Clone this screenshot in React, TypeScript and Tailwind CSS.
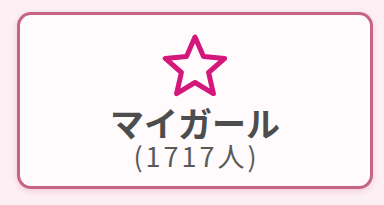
export default function App() {
  return (
    <div className="h-[205px] w-[384px] bg-[#fdf0f4] pl-[17px] pt-[12px]">
      <div className="flex h-[177px] w-[356px] flex-col items-center rounded-[14px] border-[3px] border-[#c66484] bg-[#fffbfd] pt-[18px] shadow-[0_2px_6px_rgba(200,100,130,0.25)]">
        <svg width="68" height="64" viewBox="0 0 68 64">
          <polygon
            points="34,4 42.5,23.5 63.7,25.4 47.6,39.5 52.4,60.6 34,49.5 15.6,60.6 20.4,39.5 4.3,25.4 25.5,23.5"
            fill="none"
            stroke="#d4177b"
            strokeWidth="5"
            strokeLinejoin="round"
          />
        </svg>
        <div className="mt-[8px] font-['Noto_Sans_CJK_JP',sans-serif] text-[34px] font-bold leading-[36px] text-[#4d4d4d]">
          マイガール
        </div>
        <div className="pl-[3px] font-['Noto_Sans_CJK_JP',sans-serif] text-[27px] leading-[30px] tracking-[3px] text-[#5a5a5a]">
          (1717人)
        </div>
      </div>
    </div>
  );
}
